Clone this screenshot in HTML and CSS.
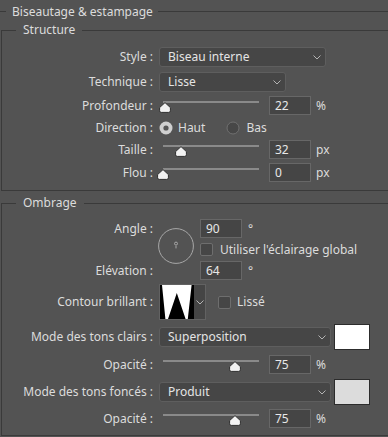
FILE: index.html
```html
<!DOCTYPE html>
<html lang="fr">
<head>
<meta charset="utf-8">
<title>Biseautage &amp; estampage</title>
<link rel="stylesheet" href="styles.css">
</head>
<body>
<div class="title">Biseautage &amp; estampage</div>

<fieldset class="group">
  <legend>Structure</legend>
  <div class="rows">
    <div class="row h20">
      <div class="lab">Style :</div>
      <div class="select w167"><span>Biseau interne</span><svg class="chev" width="8" height="5" viewBox="0 0 8 5"><polyline points="0.5,0.5 4,4 7.5,0.5"/></svg></div>
    </div>
    <div class="row h20 mt2">
      <div class="lab">Technique :</div>
      <div class="select w127"><span>Lisse</span><svg class="chev" width="8" height="5" viewBox="0 0 8 5"><polyline points="0.5,0.5 4,4 7.5,0.5"/></svg></div>
    </div>
    <div class="row mt1">
      <div class="lab">Profondeur :</div>
      <div class="slider"><div class="track"></div><svg class="thumb" style="--v:2%" viewBox="0 0 12 11"><path d="M6 0.6 L11.4 5.6 V8.8 Q11.4 10.4 9.8 10.4 H2.2 Q0.6 10.4 0.6 8.8 V5.6 Z"/></svg></div>
      <div class="num">22</div><div class="unit">%</div>
    </div>
    <div class="row">
      <div class="lab">Direction :</div>
      <div class="opt first"><svg class="radio" width="14" height="14" viewBox="0 0 14 14"><circle class="on" cx="7" cy="7" r="6.5"/><circle class="dot" cx="7" cy="7" r="2.6"/></svg><span>Haut</span></div>
      <div class="opt second"><svg class="radio" width="14" height="14" viewBox="0 0 14 14"><circle class="off" cx="7" cy="7" r="6"/></svg><span>Bas</span></div>
    </div>
    <div class="row">
      <div class="lab">Taille :</div>
      <div class="slider"><div class="track"></div><svg class="thumb" style="--v:18.75%" viewBox="0 0 12 11"><path d="M6 0.6 L11.4 5.6 V8.8 Q11.4 10.4 9.8 10.4 H2.2 Q0.6 10.4 0.6 8.8 V5.6 Z"/></svg></div>
      <div class="num">32</div><div class="unit">px</div>
    </div>
    <div class="row mt1">
      <div class="lab">Flou :</div>
      <div class="slider"><div class="track"></div><svg class="thumb" style="--v:0%" viewBox="0 0 12 11"><path d="M6 0.6 L11.4 5.6 V8.8 Q11.4 10.4 9.8 10.4 H2.2 Q0.6 10.4 0.6 8.8 V5.6 Z"/></svg></div>
      <div class="num">0</div><div class="unit">px</div>
    </div>
  </div>
</fieldset>

<fieldset class="group omb">
  <legend>Ombrage</legend>
  <div class="rows g4">
    <div class="angle">
      <div class="lab r1">Angle :</div>
      <svg class="dial" width="36" height="36" viewBox="0 0 36 36"><circle class="ring" cx="18" cy="18" r="17.4"/><circle class="knob" cx="18" cy="15.6" r="1.5"/><line class="knob" x1="18" y1="18" x2="18" y2="20.4"/></svg>
      <div class="cell r1"><div class="num n0">90</div><div class="deg">°</div></div>
      <div class="cell r2"><span class="chk"></span><span class="chktxt">Utiliser l'éclairage global</span></div>
      <div class="lab r3">Elévation :</div>
      <div class="cell r3"><div class="num n0">64</div><div class="deg">°</div></div>
    </div>
    <div class="row h36">
      <div class="lab">Contour brillant :</div>
      <div class="contour">
        <svg width="34" height="34" viewBox="0 0 34 34"><rect width="34" height="34" fill="#fff"/><path d="M0 0 H2 L5.4 34 H0 Z M16.8 8 L25.6 34 H8 Z M31.6 0 H34 V34 H27.8 Z" fill="#000"/></svg>
        <div class="carrow"><svg class="chev" width="8" height="5" viewBox="0 0 8 5"><polyline points="0.5,0.5 4,4 7.5,0.5"/></svg></div>
      </div>
      <span class="chk lisse"></span><span class="chktxt l2">Lissé</span>
    </div>
    <div class="row h26">
      <div class="lab">Mode des tons clairs :</div>
      <div class="select w172"><span>Superposition</span><svg class="chev" width="8" height="5" viewBox="0 0 8 5"><polyline points="0.5,0.5 4,4 7.5,0.5"/></svg></div>
      <div class="swatch white"></div>
    </div>
    <div class="row mt1">
      <div class="lab">Opacité :</div>
      <div class="slider"><div class="track"></div><svg class="thumb" style="--v:75%" viewBox="0 0 12 11"><path d="M6 0.6 L11.4 5.6 V8.8 Q11.4 10.4 9.8 10.4 H2.2 Q0.6 10.4 0.6 8.8 V5.6 Z"/></svg></div>
      <div class="num">75</div><div class="unit">%</div>
    </div>
    <div class="row h26 mt1">
      <div class="lab">Mode des tons foncés :</div>
      <div class="select w172"><span>Produit</span><svg class="chev" width="8" height="5" viewBox="0 0 8 5"><polyline points="0.5,0.5 4,4 7.5,0.5"/></svg></div>
      <div class="swatch gray"></div>
    </div>
    <div class="row">
      <div class="lab">Opacité :</div>
      <div class="slider"><div class="track"></div><svg class="thumb" style="--v:75%" viewBox="0 0 12 11"><path d="M6 0.6 L11.4 5.6 V8.8 Q11.4 10.4 9.8 10.4 H2.2 Q0.6 10.4 0.6 8.8 V5.6 Z"/></svg></div>
      <div class="num">75</div><div class="unit">%</div>
    </div>
  </div>
</fieldset>
</body>
</html>
```

FILE: styles.css
```css
html, body {
  margin: 0;
  padding: 0;
}
body {
  width: 388px;
  height: 437px;
  overflow: hidden;
  background: #535353;
  color: #dcdcdc;
  font-family: "Noto Sans", "Liberation Sans", sans-serif;
  font-size: 12px;
  line-height: 14px;
}

.title {
  display: flex;
  align-items: center;
  height: 15px;
  margin-top: 4px;
  white-space: nowrap;
}
.title::before {
  content: "";
  width: 6px;
  height: 1px;
  background: #3a3a3a;
  margin-right: 6px;
}
.title::after {
  content: "";
  flex: 1;
  height: 1px;
  background: #3a3a3a;
  margin-left: 5px;
}

.group {
  margin: 4px 0 0 1px;
  padding: 10px 0 8px 0;
  border: 1px solid #3a3a3a;
  border-right: none;
  min-width: 0;
}
.group legend {
  margin-left: 14px;
  padding: 0 7px;
  line-height: 14px;
}
.group.omb {
  margin-top: 5px;
  padding: 9px 0 7px 0;
}

.rows {
  display: flex;
  flex-direction: column;
  gap: 3px;
}
.rows.g4 { gap: 4px; }
.mt1 { margin-top: 1px; }
.mt2 { margin-top: 2px; }

.row {
  display: flex;
  align-items: center;
  height: 19px;
}
.row.h20 { height: 20px; }
.row.h26 { height: 26px; }
.row.h36 { height: 36px; }

.lab {
  flex: none;
  width: 151px;
  text-align: right;
  white-space: nowrap;
}

.select {
  flex: none;
  margin-left: 6px;
  height: 20px;
  box-sizing: border-box;
  border: 1px solid #5e5e5e;
  border-radius: 3px;
  background: #464646;
  color: #e4e4e4;
  display: flex;
  align-items: center;
  justify-content: space-between;
  padding: 0 4px 0 8px;
}
.w167 { width: 167px; }
.w127 { width: 127px; }
.w172 { width: 172px; }

.chev {
  flex: none;
  fill: none;
  stroke: #b4b4b4;
  stroke-width: 1;
}

.slider {
  position: relative;
  flex: none;
  width: 96px;
  height: 19px;
  margin-left: 10px;
}
.track {
  height: 2px;
  margin-top: 5px;
  background: #8a8a8a;
}
.thumb {
  position: absolute;
  top: 6px;
  left: calc(var(--v) - 6px);
  width: 12px;
  height: 11px;
  fill: #f2f2f2;
  stroke: #2e2e2e;
  stroke-width: 1;
}

.num {
  flex: none;
  margin-left: 10px;
  width: 42px;
  height: 19px;
  box-sizing: border-box;
  border: 1px solid #676767;
  background: #454545;
  padding-left: 5px;
  line-height: 17px;
  color: #e8e8e8;
}
.num.n0 { margin-left: 0; }
.unit { margin-left: 5px; }
.deg { margin-left: 6px; }

.opt {
  display: flex;
  align-items: center;
  gap: 5px;
}
.opt.first { margin-left: 6px; }
.opt.second { margin-left: 21px; gap: 6px; }
.radio { flex: none; }
.radio .on { fill: #cfcfcf; }
.radio .dot { fill: #555555; }
.radio .off { fill: #474747; stroke: #707070; stroke-width: 1; }

.angle {
  display: grid;
  grid-template-columns: 151px 35px auto;
  grid-template-rows: 19px 17px 19px;
  column-gap: 6px;
  row-gap: 3px;
}
.angle .lab {
  grid-column: 1;
  align-self: center;
}
.angle .r1 { grid-row: 1; }
.angle .r2 { grid-row: 2; }
.angle .r3 { grid-row: 3; }
.dial {
  grid-column: 2;
  grid-row: 1 / 4;
  margin: 9px 0 0 -1px;
}
.dial .ring { fill: none; stroke: #a8a8a8; stroke-width: 1; }
.dial .knob { fill: none; stroke: #a8a8a8; stroke-width: 1; }
.cell {
  grid-column: 3;
  display: flex;
  align-items: center;
}

.chk {
  flex: none;
  width: 13px;
  height: 13px;
  box-sizing: border-box;
  border: 1px solid #6e6e6e;
  border-radius: 2px;
  background: #464646;
}
.chktxt { margin-left: 7px; white-space: nowrap; }
.chk.lisse { margin-left: 12px; }
.chktxt.l2 { margin-left: 6px; }

.contour {
  flex: none;
  margin-left: 6px;
  display: flex;
  height: 36px;
  box-sizing: border-box;
  border: 1px solid #626262;
}
.contour svg { display: block; }
.carrow {
  width: 11px;
  background: #454545;
  display: flex;
  align-items: center;
  justify-content: center;
}

.swatch {
  flex: none;
  margin-left: 3px;
  width: 36px;
  height: 26px;
  box-sizing: border-box;
  border: 1px solid #2c2c2c;
}
.swatch.white { background: #ffffff; }
.swatch.gray { background: #dcdcdc; }
```
